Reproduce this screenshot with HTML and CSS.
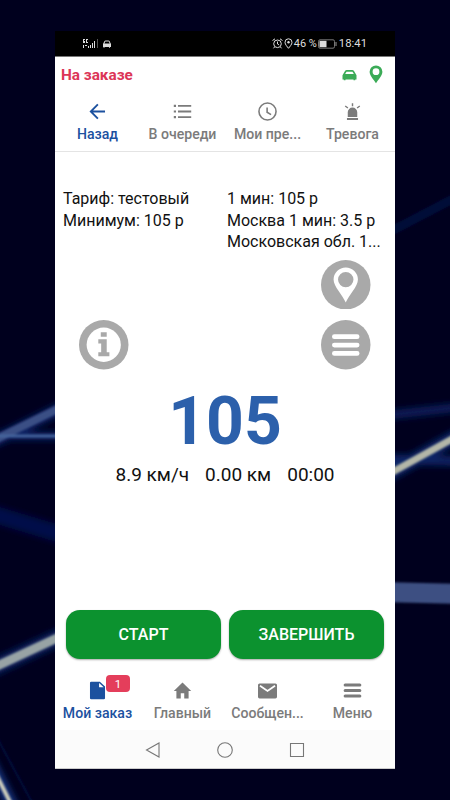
FILE: index.html
```html
<!DOCTYPE html>
<html lang="ru">
<head>
<meta charset="utf-8">
<title>Мой заказ</title>
<link rel="stylesheet" href="styles.css">
</head>
<body>
<svg class="backdrop" viewBox="0 0 450 800" aria-hidden="true">
  <defs>
    <filter id="soft" filterUnits="userSpaceOnUse" x="-40" y="-40" width="530" height="880"><feGaussianBlur stdDeviation="1.3"/></filter>
    <filter id="glow" filterUnits="userSpaceOnUse" x="-40" y="-40" width="530" height="880"><feGaussianBlur stdDeviation="3"/></filter>
  </defs>
  <g filter="url(#glow)" fill="none">
    <path d="M-20 510L70 537" stroke="#020f48" stroke-width="17"/>
    <path d="M-20 448L70 404" stroke="#0b2264" stroke-width="12"/>
    <path d="M-20 436H70" stroke="#0b2264" stroke-width="8"/>
    <path d="M-20 674L70 632" stroke="#09205e" stroke-width="16"/>
    <path d="M-10 762L15 812" stroke="#12337a" stroke-width="12"/>
    <path d="M380 416L470 406" stroke="#071f58" stroke-width="9"/>
    <path d="M380 459L460 461" stroke="#0a2262" stroke-width="10"/>
    <path d="M380 479L470 429" stroke="#0b2668" stroke-width="14"/>
  </g>
  <g filter="url(#soft)" fill="none">
    <path d="M380 237L470 190" stroke="#040a38" stroke-width="9"/>
    <path d="M-20 447L70 403" stroke="#3b4f85" stroke-width="8"/>
    <path d="M-20 436H70" stroke="#45639c" stroke-width="3"/>
    <path d="M-20 674L70 632" stroke="#98a3a5" stroke-width="9"/>
    <path d="M-10 762L15 812" stroke="#cdcdbb" stroke-width="4"/>
    <path d="M-5 734L35 808" stroke="#050e3e" stroke-width="2"/>
    <path d="M380 479L470 429" stroke="#b3b6a8" stroke-width="7"/>
    <path d="M380 592L470 594" stroke="#3c5082" stroke-width="20"/>
  </g>
</svg>
<main class="phone">
  <div class="status">
    <svg class="signal" width="30" height="12" viewBox="0 0 30 12" fill="#ddd">
      <path d="M1 1h2v1H2v1h1v2H1zM4 1h2v1H5v2h1v1H4zM1 7h1v3H1zM3 7h2v1H3zM6 8h1v2H6zM8 7h1v3H8zM10 5h1v5h-1zM12 3h1v7h-1z"/><path d="M15 1h1v9h-1z" fill="#555"/>
      <path d="M21 6l1.500-3q.3-.6 1-.6h3q.7 0 1 .6l1.500 3v3h-1v.8h-1V9h-4.500v.8h-1V9H21z"/><path d="M22.400 5.500l.9-2h3.500l.9 2z" fill="#000"/>
    </svg>
    <div class="indicators">
      <svg width="11" height="11" viewBox="0 0 11 11" fill="none" stroke="#ddd"><circle cx="5.500" cy="5.800" r="3.800"/><path d="M.5 2.500L3 .8M10.500 2.500L8 .8M5.500 3.500V6l1.700 1M2.500 9l-1 1.300M8.500 9l1 1.300"/></svg>
      <svg class="gps" width="9" height="11" viewBox="0 0 9 11"><path d="M4.500 10.300C3.300 8.700 1 6.500 1 4.300a3.500 3.500 0 0 1 7 0c0 2.200-2.300 4.400-3.500 6z" fill="none" stroke="#ddd"/><circle cx="4.500" cy="4.200" r="1.200" fill="#ddd"/></svg>
      <span class="percent">46 %</span>
      <svg class="battery" width="19" height="10" viewBox="0 0 19 10"><rect x=".5" y=".8" width="16" height="8.400" rx="1.500" fill="none" stroke="#777"/><rect x="1.500" y="1.800" width="7" height="6.400" fill="#ddd"/><path d="M18 3v4" stroke="#999"/></svg>
      <span class="clock">18:41</span>
    </div>
  </div>
  <header class="title">
    <h1>На заказе</h1>
    <svg width="15" height="12" viewBox="0 0 15 12"><path d="M.5 6.300L3 2Q3.600 1 4.800 1h5.400q1.200 0 1.800 1l2.500 4.300v4.200h-1.300v.7h-1.700v-.7h-8v.7H1.800v-.7H.5z" fill="#3bab57"/><path d="M3.200 5l1.300-2.200h6L11.800 5z" fill="#fff"/></svg>
    <svg class="place" width="14" height="19" viewBox="0 0 14 19"><path fill="#3bab57" fill-rule="evenodd" d="M7 18.300C5 14.800.6 10.800.6 6.800a6.400 6.400 0 0 1 12.800 0c0 4-4.400 8-6.400 11.500zM7 3.300a3.400 3.400 0 1 0 0 6.800 3.400 3.400 0 0 0 0-6.800z"/></svg>
  </header>
  <nav class="tabs top">
    <a class="tab active"><svg viewBox="0 0 24 24"><path d="M21.500 12H3.500M12.500 3L3.500 12l9 9" fill="none" stroke="currentColor" stroke-width="2.300"/></svg><span>Назад</span></a>
    <a class="tab"><svg viewBox="0 0 24 24" fill="currentColor"><path d="M1 3.500h2.800v2.800H1zm0 7.100h2.800v2.800H1zm0 7.100h2.800v2.800H1zM6.300 3.700H23v2.400H6.300zm0 7.100H23v2.400H6.300zm0 7.100H23v2.400H6.300z"/></svg><span>В очереди</span></a>
    <a class="tab"><svg viewBox="0 0 24 24" fill="none" stroke="currentColor" stroke-width="2"><circle cx="12" cy="12" r="10.800"/><path d="M11.500 7v6l5 3"/></svg><span>Мои пре...</span></a>
    <a class="tab"><svg viewBox="0 0 24 24"><path fill="currentColor" d="M6 18.800V13a6 6 0 0 1 12 0v5.800zM5 20.200h14v2.500H5z"/><path d="M12 1.500v4M2.800 5l3.400 2.600M21.200 5l-3.400 2.600" fill="none" stroke="currentColor" stroke-width="1.800"/></svg><span>Тревога</span></a>
  </nav>
  <section class="meter">
    <div class="tariff">
      <div><p>Тариф: тестовый</p><p>Минимум: 105 р</p></div>
      <div><p>1 мин: 105 р</p><p>Москва 1 мин: 3.5 р</p><p>Московская обл. 1...</p></div>
    </div>
    <div class="actions">
      <svg class="round" viewBox="0 0 50 50"><circle cx="25" cy="25" r="25" fill="#a9a9a9"/><circle cx="25" cy="25" r="17.300" fill="#fff"/><path d="M22 12.300h6v4.500h-6zM19.500 19.500H28v13h2.700v4.200H19.500v-4.200h2.900v-8.800h-2.900z" fill="#a9a9a9"/></svg>
      <div class="stack">
        <svg class="round" viewBox="0 0 50 50"><circle cx="25" cy="25" r="25" fill="#a9a9a9"/><path fill="#fff" fill-rule="evenodd" d="M25 43C21.800 35.500 12.700 27 12.700 19.800a12.300 12.300 0 0 1 24.600 0C37.300 27 28.200 35.500 25 43zM25 12a7.800 7.800 0 1 0 0 15.600A7.800 7.800 0 0 0 25 12z"/></svg>
        <svg class="round" viewBox="0 0 50 50"><circle cx="25" cy="25" r="25" fill="#a9a9a9"/><path d="M13.500 16.800h23M13.500 25.300h23M13.500 33.800h23" stroke="#fff" stroke-width="4.800" stroke-linecap="round"/></svg>
      </div>
    </div>
    <div class="price">105</div>
    <div class="stats"><span>8.9 км/ч</span><span>0.00 км</span><span>00:00</span></div>
    <div class="buttons"><button>СТАРТ</button><button>ЗАВЕРШИТЬ</button></div>
  </section>
  <nav class="tabs bottom">
    <a class="tab active"><svg viewBox="0 0 24 24"><path fill="currentColor" fill-rule="evenodd" d="M4 1H15l6.500 6v14.500q0 1.500-1.500 1.500h-16Q2.500 23 2.500 21.500v-19Q2.500 1 4 1zM14 2.500V8H19.800z"/></svg><span>Мой заказ</span><b class="badge">1</b></a>
    <a class="tab"><svg viewBox="0 0 24 24"><path fill="currentColor" d="M12 2L1 12.500h3.300V22h5.500v-6.500h4.400V22h5.500v-9.500H23z"/></svg><span>Главный</span></a>
    <a class="tab"><svg viewBox="0 0 24 24"><rect y="3" width="24" height="19" rx="2" fill="currentColor"/><path d="M2.500 6l9.500 6.500L21.500 6" fill="none" stroke="#fff" stroke-width="2.300"/></svg><span>Сообщен...</span></a>
    <a class="tab"><svg viewBox="0 0 24 24"><path d="M2.700 5h18.600M2.700 12h18.600M2.700 19h18.600" stroke="currentColor" stroke-width="3.800" stroke-linecap="round"/></svg><span>Меню</span></a>
  </nav>
  <footer class="system">
    <svg viewBox="0 0 16 16"><path d="M14 1v14L1.500 8z"/></svg>
    <svg viewBox="0 0 16 16"><circle cx="8" cy="8" r="7.300"/></svg>
    <svg viewBox="0 0 16 16"><path d="M1.500 1.500h13v13h-13z"/></svg>
  </footer>
</main>
</body>
</html>
```
FILE: styles.css
```css
* { box-sizing: border-box; }
body {
  margin: 0;
  width: 450px;
  height: 800px;
  padding: 31px 55px;
  overflow: hidden;
  background: #00001e;
  font-family: Roboto, sans-serif;
}
svg { display: block; flex: none; }
.backdrop { position: absolute; left: 0; top: 0; width: 450px; height: 800px; }
.phone {
  position: relative;
  display: flex;
  flex-direction: column;
  width: 340px;
  height: 738px;
  background: #fff;
}
.status {
  display: flex;
  justify-content: space-between;
  align-items: center;
  height: 26px;
  padding: 0 28px 0 27px;
  border-bottom: 1px solid #777;
  background: #000;
  color: #ddd;
  font-size: 11px;
}
.indicators { display: flex; align-items: center; }
.gps { margin-left: 1px; }
.percent { margin-left: 1px; white-space: nowrap; }
.battery { margin: 0 2px 0 1px; }
.clock { font-size: 11.300px; }
.title {
  display: flex;
  align-items: center;
  height: 35px;
  padding: 0 12px 0 6px;
}
.title h1 {
  flex: 1;
  margin: 0;
  color: #dc3557;
  font-size: 15.300px;
  font-weight: 700;
}
.place { margin-left: 12px; }
.tabs { display: grid; grid-template-columns: repeat(4, 85px); }
.tab {
  position: relative;
  display: flex;
  flex-direction: column;
  align-items: center;
  gap: 4px;
  color: #7b7b7b;
  font-size: 14.100px;
  font-weight: 500;
  line-height: 18px;
  white-space: nowrap;
}
.tab svg { width: 19px; height: 19px; }
.active { color: #1c519f; }
.top { height: 60px; padding-top: 10px; border-bottom: 1px solid #e4e4e4; }
.bottom { height: 60px; padding-top: 11px; }
.badge {
  position: absolute;
  left: 51px;
  top: -6px;
  width: 24px;
  height: 17px;
  border-radius: 4px;
  background: #e43e5b;
  color: #fff;
  font-size: 11.500px;
  font-weight: 400;
  line-height: 18px;
  text-align: center;
}
.meter {
  display: flex;
  flex: 1;
  flex-direction: column;
  padding: 36px 11px 11px 8px;
}
.tariff {
  display: grid;
  grid-template-columns: 164px 1fr;
  height: 72px;
  color: #111;
  font-size: 16px;
  line-height: 21.500px;
  white-space: nowrap;
}
.tariff p { margin: 0; }
.actions {
  display: flex;
  justify-content: space-between;
  align-items: flex-end;
  height: 109.500px;
  padding: 0 13.500px 0 16px;
}
.stack { display: flex; flex-direction: column; gap: 11px; }
.round { width: 49.500px; height: 49.500px; }
.price {
  height: 76px;
  margin-top: 14.500px;
  padding-left: 3px;
  color: #2c60ab;
  font-size: 66px;
  font-weight: 700;
  line-height: 76px;
  text-align: center;
}
.stats {
  display: flex;
  justify-content: center;
  gap: 16px;
  margin-top: 3px;
  padding-left: 3px;
  color: #111;
  font-size: 19px;
  line-height: 24px;
}
.buttons {
  display: grid;
  grid-template-columns: 1fr 1fr;
  gap: 8px;
  margin-top: auto;
  margin-left: 3px;
}
.buttons button {
  height: 49px;
  padding: 0;
  border: 0;
  border-radius: 14px;
  background: #0c922f;
  box-shadow: 0 1px 2px #0005;
  color: #fff;
  font: 500 16px Roboto, sans-serif;
}
.system {
  display: flex;
  justify-content: center;
  gap: 56px;
  height: 39px;
  padding-top: 12px;
  border-bottom: 1px solid #ccc;
  background: #fbfbfb;
}
.system svg { width: 16px; height: 16px; fill: none; stroke: #777; stroke-width: 1.100; }
```
